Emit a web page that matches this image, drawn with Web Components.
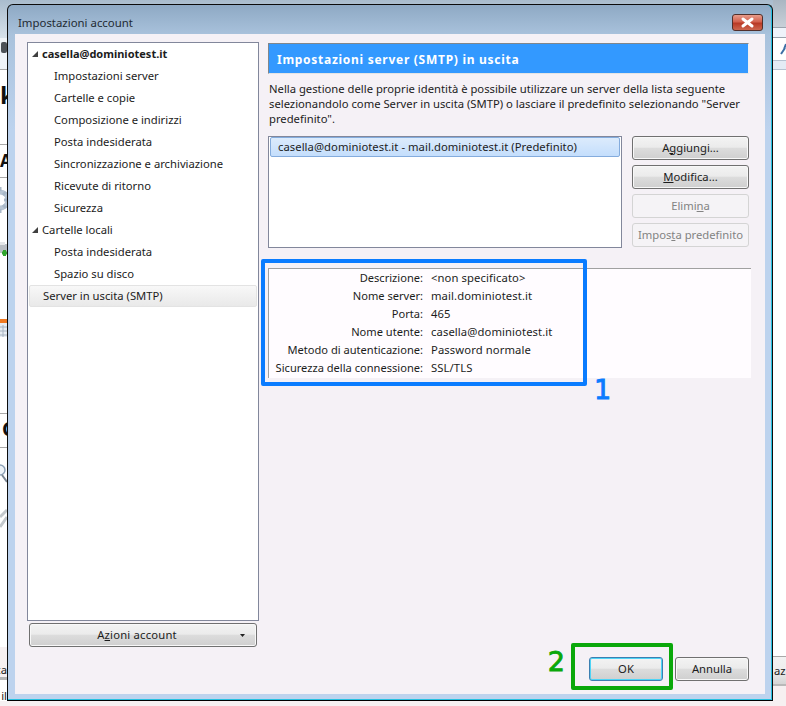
<!DOCTYPE html>
<html lang="it">
<head>
<meta charset="utf-8">
<title>Impostazioni account</title>
<style>
    html, body { margin: 0; padding: 0; background: #fff; }
    body { font-family: "Noto Sans", Tahoma, sans-serif; font-size: 11.25px; color: #1c1c1c; }
</style>
</head>
<body>
<desk-top>
    <desk-scraps></desk-scraps>
    <dialog-window heading="Impostazioni account">
        <settings-layout>
            <account-tree slot="tree">
                <tree-row level="1" arrow bold>casella@dominiotest.it</tree-row>
                <tree-row level="2">Impostazioni server</tree-row>
                <tree-row level="2">Cartelle e copie</tree-row>
                <tree-row level="2">Composizione e indirizzi</tree-row>
                <tree-row level="2">Posta indesiderata</tree-row>
                <tree-row level="2">Sincronizzazione e archiviazione</tree-row>
                <tree-row level="2">Ricevute di ritorno</tree-row>
                <tree-row level="2">Sicurezza</tree-row>
                <tree-row level="1" arrow>Cartelle locali</tree-row>
                <tree-row level="2">Posta indesiderata</tree-row>
                <tree-row level="2">Spazio su disco</tree-row>
                <tree-row level="1" selected>Server in uscita (SMTP)</tree-row>
            </account-tree>
            <win-button slot="actions" caret>A<u>z</u>ioni account</win-button>

            <panel-header slot="header">Impostazioni server (SMTP) in uscita</panel-header>
            <span slot="intro">Nella gestione delle proprie identità è possibile utilizzare un server della lista seguente<br>selezionandolo come Server in uscita (SMTP) o lasciare il predefinito selezionando "Server<br>predefinito".</span>
            <server-list slot="list">
                <server-item>casella@dominiotest.it - mail.dominiotest.it (Predefinito)</server-item>
            </server-list>
            <win-button slot="side">A<u>g</u>giungi...</win-button>
            <win-button slot="side"><u>M</u>odifica...</win-button>
            <win-button slot="side" disabled>Elimi<u>n</u>a</win-button>
            <win-button slot="side" disabled>Impos<u>t</u>a predefinito</win-button>
            <server-details slot="details">
                <detail-row label="Descrizione:">&lt;non specificato&gt;</detail-row>
                <detail-row label="Nome server:">mail.dominiotest.it</detail-row>
                <detail-row label="Porta:">465</detail-row>
                <detail-row label="Nome utente:">casella@dominiotest.it</detail-row>
                <detail-row label="Metodo di autenticazione:">Password normale</detail-row>
                <detail-row label="Sicurezza della connessione:">SSL/TLS</detail-row>
            </server-details>
            <win-button slot="footer" focused wide>OK</win-button>
            <win-button slot="footer" wide>Annulla</win-button>
        </settings-layout>
    </dialog-window>
    <mark-box number="1" color="#0a7cff" side="right" style="left:261px;top:259px;width:326px;height:127px"></mark-box>
    <mark-box number="2" color="#0aa80a" side="left" style="left:571px;top:643px;width:102px;height:47px"></mark-box>
</desk-top>

<script>
// helper so every class below stays short
function shadow(el, html) {
    el.attachShadow({ mode: 'open' }).innerHTML = html
}

class DeskTop extends HTMLElement {
    constructor() {
        super()
        shadow(this, `
        <style>
            :host { display: block; position: relative; width: 786px; height: 706px; overflow: hidden; background: #fff; }
        </style>
        <slot></slot>`)
    }
}

// bits of the main window that stick out at the sides of the dialog
class DeskScraps extends HTMLElement {
    constructor() {
        super()
        shadow(this, `
        <style>
            :host { display: block; position: absolute; inset: 0; font-family: "Noto Sans", sans-serif; color: #222; }
            div, svg, span { position: absolute; }
            .line { height: 1px; background: #a9a9a9; }
            .cut { overflow: hidden; white-space: nowrap; }
            .big { white-space: nowrap; color: #111; font-weight: bold; }
        </style>
        <div style="left:0;top:0;width:786px;height:69px;background:linear-gradient(#a9bccd,#dbe5ee 60%,#f7f9fb)"></div>
        <div style="left:0;top:38px;width:7px;height:31px;background:#eef3f8"></div>
        <div style="left:1px;top:42px;width:6px;height:11px;background:#4c5258;border-radius:2px"></div>
        <div style="left:0;top:69px;width:8px;height:635px;background:#fff"></div>
        <div class="line" style="left:0;top:69px;width:8px"></div>

        <div style="left:773px;top:0;width:13px;height:27px;background:linear-gradient(#a9b6c2,#c8d0d8)"></div>
        <div style="left:773px;top:27px;width:13px;height:11px;background:#eef3fa;border-top:1px solid #9aa3ad;border-bottom:1px solid #9aa3ad;box-sizing:border-box"></div>
        <div style="left:773px;top:38px;width:13px;height:22px;background:#fff"></div>
        <div style="left:773px;top:60px;width:13px;height:10px;background:#e3ebf5;border-top:1px solid #b5c2d1;border-bottom:1px solid #b5c2d1;box-sizing:border-box"></div>
        <div style="left:773px;top:70px;width:13px;height:586px;background:#fff"></div>
        <svg style="left:780px;top:43px" width="6" height="12" viewBox="0 0 6 12"><path d="M1 11 L5 5 M4 6 L6 1" stroke="#3d6fa5" stroke-width="2" fill="none"/></svg>

        <span class="big" style="left:0;top:80px;font-size:24px;line-height:30px">k</span>
        <div class="line" style="left:0;top:144px;width:8px"></div>
        <span class="big" style="left:0;top:150px;font-size:17px;line-height:22px">A</span>
        <div class="line" style="left:0;top:177px;width:8px"></div>
        <svg style="left:0;top:184px" width="7" height="32" viewBox="0 0 7 32"><circle cx="0" cy="16" r="8" fill="none" stroke="#b9c6d4" stroke-width="5"/><path d="M0 3v4M6 8l-3 3M7 16H4M6 24l-3-3M0 29v-4" stroke="#a9b8c8" stroke-width="3"/></svg>
        <svg style="left:0;top:242px" width="7" height="18" viewBox="0 0 7 18"><rect x="0" y="2" width="7" height="9" fill="#b9bec4"/><rect x="0" y="0" width="5" height="3" fill="#e4e6e8"/><path d="M2 11h5M4.500 8v6" stroke="#31a62f" stroke-width="3"/></svg>
        <div style="left:0;top:319px;width:7px;height:4px;background:#f07a22"></div>
        <svg style="left:0;top:323px" width="7" height="14" viewBox="0 0 7 14"><rect width="7" height="14" fill="#e8edf3"/><path d="M0 4h7M0 8h7M0 12h7M3 2v12" stroke="#a8b4c2"/></svg>
        <div class="line" style="left:0;top:413px;width:8px"></div>
        <span class="big" style="left:2px;top:417px;font-size:20px;line-height:24px">C</span>
        <div class="line" style="left:0;top:447px;width:8px"></div>
        <svg style="left:0;top:464px" width="7" height="20" viewBox="0 0 7 20"><circle cx="0" cy="6" r="5" fill="#eef3f8" stroke="#8fa3b8" stroke-width="1.500"/><path d="M2 11l5 7" stroke="#7c8794" stroke-width="2"/></svg>
        <svg style="left:0;top:507px" width="7" height="24" viewBox="0 0 7 24"><path d="M0 10l7-7M0 20l7-10" stroke="#c3c8cc" stroke-width="3"/></svg>

        <div style="left:0;top:647px;width:8px;height:59px;background:#f6f0f1"></div>
        <div class="cut" style="left:0;top:662px;width:7px;height:16px;line-height:16px"><span style="right:0">ca</span></div>
        <div style="left:0;top:677px;width:7px;height:3px;background:#b4b4b4"></div>
        <div style="left:0;top:680px;width:7px;height:26px;background:#fff"></div>
        <div class="cut" style="left:0;top:688px;width:7px;height:16px;line-height:16px"><span style="right:0">il</span></div>

        <div style="left:0;top:701px;width:786px;height:5px;background:#f6f0f1"></div>
        <div style="left:773px;top:656px;width:13px;height:50px;background:#f6f0f1"></div>
        <div class="cut" style="left:773px;top:656px;width:13px;height:30px;line-height:28px;background:linear-gradient(#f2f2f2,#eee 48%,#d5d5d5);border-top:1px solid #a8a8a8;border-bottom:2px solid #b9b9b9;box-sizing:border-box"><span style="left:1px">az</span></div>`)
    }
}

class DialogWindow extends HTMLElement {
    constructor() {
        super()
        shadow(this, `
        <style>
            :host { display: flex; flex-direction: column; position: absolute; left: 7px; top: 4px; width: 766px; height: 697px; box-sizing: border-box; border: 1px solid #0c0c0c; border-bottom-color: #000; border-radius: 6px 6px 0 0; background: linear-gradient(#8ea9c4 0, #a9c2dc 30px, #bdd3ee 125px); padding: 0 7px 6px; box-shadow: inset 0 -1px 0 #25c0e0, inset -1px 0 0 #25c0e0; }
            .bar { flex: none; height: 29px; display: flex; align-items: flex-start; justify-content: space-between; }
            .title { margin: 9px 0 0 3px; font-size: 11.4px; line-height: 18px; color: #1f2a33; }
            svg { margin: 9px 2px 0 0; display: block; }
            .body { flex: 1; min-height: 0; background: #f5f1f6; }
        </style>
        <div class="bar">
            <span class="title"></span>
            <svg width="31" height="17" viewBox="0 0 31 17">
                <defs><linearGradient id="r" x1="0" y1="0" x2="0" y2="1">
                    <stop offset="0" stop-color="#e9a08f"/><stop offset=".45" stop-color="#d3624f"/><stop offset=".55" stop-color="#b93a26"/><stop offset="1" stop-color="#cf6a52"/>
                </linearGradient></defs>
                <rect x=".5" y=".5" width="30" height="16" rx="2.500" fill="url(#r)" stroke="#51302c"/>
                <path d="M11 5l9 7M20 5l-9 7" stroke="#fff" stroke-width="3" stroke-linecap="round"/>
            </svg>
        </div>
        <div class="body"><slot></slot></div>`)
        this.shadowRoot.querySelector('.title').textContent = this.getAttribute('heading')
    }
}

class SettingsLayout extends HTMLElement {
    constructor() {
        super()
        shadow(this, `
        <style>
            :host { display: grid; grid-template-columns: 232px 481px; column-gap: 9px; height: 100%; box-sizing: border-box; padding: 8px 16px 13px 12px; align-items: stretch; }
            .left { display: flex; flex-direction: column; gap: 2px; height: 605px; }
            .left ::slotted([slot=actions]) { margin: 0 2px; }
            .right { display: flex; flex-direction: column; padding-top: 1px; }
            .intro { margin: 7px 0 1px 1px; height: 54px; line-height: 15px; }
            .mid { display: flex; gap: 10px; height: 112px; }
            .side { display: flex; flex-direction: column; gap: 5px; width: 117px; flex: none; padding-bottom: 1px; }
            .foot { margin-top: auto; display: flex; justify-content: flex-end; gap: 12px; }
            ::slotted([slot=details]) { margin-top: 20px; }
        </style>
        <div class="left">
            <slot name="tree"></slot>
            <slot name="actions"></slot>
        </div>
        <div class="right">
            <slot name="header"></slot>
            <div class="intro"><slot name="intro"></slot></div>
            <div class="mid">
                <slot name="list"></slot>
                <div class="side"><slot name="side"></slot></div>
            </div>
            <slot name="details"></slot>
            <div class="foot"><slot name="footer"></slot></div>
        </div>`)
    }
}

class AccountTree extends HTMLElement {
    constructor() {
        super()
        shadow(this, `
        <style>
            :host { display: block; flex: 1; min-height: 0; box-sizing: border-box; background: #fff; border: 1px solid #82879b; }
        </style>
        <slot></slot>`)
    }
}

class TreeRow extends HTMLElement {
    constructor() {
        super()
        shadow(this, `
        <style>
            :host { display: flex; align-items: center; height: 22px; box-sizing: border-box; padding: 0 0 2px 14px; white-space: nowrap; position: relative; }
            :host([level="2"]) { padding-left: 26px; }
            :host([bold]) { font-weight: bold; font-size: 11px; }
            :host([selected]) { margin: 0 1px; padding-left: 13px; border: 1px solid #e3e3e3; border-radius: 2px; background: linear-gradient(#f8f8f8, #e9e9e9); }
            svg { position: absolute; left: 4px; top: 8px; display: none; }
            :host([arrow]) svg { display: block; }
        </style>
        <svg width="6" height="6" viewBox="0 0 6 6"><path d="M0 6 L6 0 V6 Z" fill="#404040"/></svg>
        <slot></slot>`)
    }
}

class WinButton extends HTMLElement {
    constructor() {
        super()
        shadow(this, `
        <style>
            :host { display: flex; align-items: center; justify-content: center; height: 24px; box-sizing: border-box; padding-bottom: 2px; position: relative; border: 1px solid #707070; border-radius: 3px; background: linear-gradient(#f3f3f3, #ebebeb 46%, #dcdcdc 52%, #cfcfcf); box-shadow: inset 0 0 0 1px #f8f8f8; white-space: nowrap; cursor: default; }
            :host([disabled]) { border-color: #d4d4d4; background: #f5f3f6; box-shadow: none; color: #838383; }
            :host([focused]) { border-color: #3c7fb1; box-shadow: inset 0 0 0 1px #4ed4f6; }
            :host([wide]) { width: 74px; }
            :host([caret]) { padding-right: 12px; letter-spacing: .2px; }
            svg { position: absolute; right: 11px; top: 10px; display: none; }
            :host([caret]) svg { display: block; }
        </style>
        <slot></slot>
        <svg width="5" height="3" viewBox="0 0 5 3"><path d="M0 0h5L2.500 3z" fill="#222"/></svg>`)
    }
}

class PanelHeader extends HTMLElement {
    constructor() {
        super()
        shadow(this, `
        <style>
            :host { display: flex; align-items: center; height: 31px; box-sizing: border-box; padding: 1px 0 0 8px; background: #3399ff; color: #fff; font-weight: bold; font-size: 12px; letter-spacing: .72px; border: 1px solid; border-color: #80868c #f0f0f0 #e4e4e4 #80868c; }
        </style>
        <slot></slot>`)
    }
}

class ServerList extends HTMLElement {
    constructor() {
        super()
        shadow(this, `
        <style>
            :host { display: block; width: 354px; flex: none; height: 112px; box-sizing: border-box; background: #fff; border: 1px solid #82879b; padding: 0 1px; }
        </style>
        <slot></slot>`)
    }
}

class ServerItem extends HTMLElement {
    constructor() {
        super()
        shadow(this, `
        <style>
            :host { display: flex; align-items: center; height: 20px; box-sizing: border-box; padding: 0 0 2px 7px; border: 1px solid #84acdd; border-radius: 2px; background: linear-gradient(#dcebfc, #c4defc); white-space: nowrap; letter-spacing: .05px; }
        </style>
        <slot></slot>`)
    }
}

class ServerDetails extends HTMLElement {
    constructor() {
        super()
        shadow(this, `
        <style>
            :host { display: block; margin-right: -2px; height: 110px; box-sizing: border-box; background: #fffcff; border-top: 1px solid #a0a0a0; border-left: 1px solid #a0a0a0; }
        </style>
        <slot></slot>`)
    }
}

class DetailRow extends HTMLElement {
    constructor() {
        super()
        shadow(this, `
        <style>
            :host { display: grid; grid-template-columns: 154px 1fr; column-gap: 8px; height: 18px; line-height: 18px; white-space: nowrap; }
            .label { text-align: right; font-size: 11.1px; }
            .value { letter-spacing: .1px; }
        </style>
        <span class="label"></span>
        <span class="value"><slot></slot></span>`)
        this.shadowRoot.querySelector('.label').textContent = this.getAttribute('label')
    }
}

// the coloured frames and numbers drawn on top of the screenshot
class MarkBox extends HTMLElement {
    constructor() {
        super()
        const color = this.getAttribute('color')
        shadow(this, `
        <style>
            :host { display: block; position: absolute; box-sizing: border-box; border: 4px solid ${color}; border-radius: 2px; }
            span { position: absolute; font: 27px/32px "DejaVu Sans", sans-serif; color: ${color}; -webkit-text-stroke: .9px ${color}; }
            :host([side=right]) span { left: 100%; top: 100%; margin: -8px 0 0 11px; }
            :host([side=left]) span { right: 100%; top: 0; margin: -1px 10px 0 0; }
        </style>
        <span></span>`)
        this.shadowRoot.querySelector('span').textContent = this.getAttribute('number')
    }
}

customElements.define('desk-top', DeskTop)
customElements.define('desk-scraps', DeskScraps)
customElements.define('dialog-window', DialogWindow)
customElements.define('settings-layout', SettingsLayout)
customElements.define('account-tree', AccountTree)
customElements.define('tree-row', TreeRow)
customElements.define('win-button', WinButton)
customElements.define('panel-header', PanelHeader)
customElements.define('server-list', ServerList)
customElements.define('server-item', ServerItem)
customElements.define('server-details', ServerDetails)
customElements.define('detail-row', DetailRow)
customElements.define('mark-box', MarkBox)
</script>
</body>
</html>
